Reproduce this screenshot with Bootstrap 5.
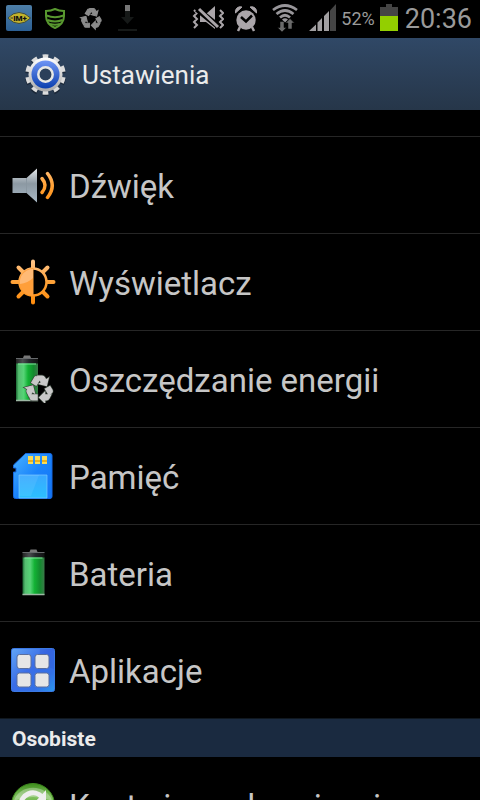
<!DOCTYPE html>
<html lang="pl" data-bs-theme="dark">
<head>
<meta charset="utf-8">
<meta name="viewport" content="width=device-width, initial-scale=1">
<title>Ustawienia</title>
<link rel="stylesheet" href="https://cdn.jsdelivr.net/npm/bootstrap@5.3.0/dist/css/bootstrap.min.css">
<style>
body { font-family: Roboto, "Open Sans", sans-serif; background: #000; color: #c6c6c6; }
svg { display: block; flex: none; }
.status-bar { height: 38px; padding: 0 8px 2px 6px; color: #9a9a9a; }
.status-left { gap: 10px; }
.status-right { gap: 7px; }
.status-power { gap: 5px; font-size: 18px; line-height: 24px; }
.status-power span { padding-top: 2px; }
.status-clock { padding-top: 2px; font-size: 27px; line-height: 32px; }
.title-bar { height: 72px; padding: 0 24px; gap: 16px; background: linear-gradient(#304866, #263649); }
.title-bar h1 { padding-top: 2px; font-size: 26px; line-height: 32px; color: #ebebeb; }
.settings { padding-top: 26px; }
.setting { height: 97px; padding: 0 9px; gap: 12px; border-top: 1px solid #262626; color: #c6c6c6; font-size: 33px; line-height: 40px; }
.setting span { padding-top: 4px; }
.setting:hover { color: #fff; }
.setting.after-section { height: 96px; border-top: 0; }
.section-title { padding: 2px 12px 0; font-size: 21px; line-height: 36px; color: #ebebeb; background: #1a2a40; border-top: 1px solid #101820; }
</style>
<script src="https://cdn.jsdelivr.net/npm/bootstrap@5.3.0/dist/js/bootstrap.bundle.min.js" defer></script>
</head>
<body class="vh-100 d-flex flex-column overflow-hidden">

<svg width="0" height="0" class="position-absolute" aria-hidden="true">
  <defs>
    <linearGradient id="gBlue" x2="0" y2="1"><stop stop-color="#6f95f5"/><stop offset="1" stop-color="#0b3fae"/></linearGradient>
    <linearGradient id="gMetal" x2="0" y2="1"><stop stop-color="#fff"/><stop offset="1" stop-color="#a9a9a9"/></linearGradient>
    <linearGradient id="gSteel" x2="0" y2="1"><stop stop-color="#e4e7ea"/><stop offset=".45" stop-color="#8c99a3"/><stop offset="1" stop-color="#a9b9c6"/></linearGradient>
    <linearGradient id="gOrange" gradientUnits="userSpaceOnUse" x1="0" y1="2" x2="0" y2="46"><stop stop-color="#ffc58a"/><stop offset=".5" stop-color="#ffa238"/><stop offset="1" stop-color="#ff8c0c"/></linearGradient>
    <linearGradient id="gCell"><stop stop-color="#1c6a34"/><stop offset=".12" stop-color="#55bd70"/><stop offset=".35" stop-color="#56d476"/><stop offset=".55" stop-color="#12b234"/><stop offset=".8" stop-color="#138a2e"/><stop offset="1" stop-color="#3a7a48"/></linearGradient>
    <linearGradient id="gCap"><stop stop-color="#222"/><stop offset=".3" stop-color="#4b4e50"/><stop offset=".6" stop-color="#23262a"/><stop offset="1" stop-color="#111"/></linearGradient>
    <linearGradient id="gCard" x2="1" y2="1"><stop stop-color="#48b2ff"/><stop offset=".5" stop-color="#1a83fb"/><stop offset="1" stop-color="#1374f4"/></linearGradient>
    <linearGradient id="gLabel" x2="0" y2="1"><stop stop-color="#3aa8ff"/><stop offset="1" stop-color="#2bc0ff"/></linearGradient>
    <linearGradient id="gApps" x2="1" y2="1"><stop stop-color="#62a6f6"/><stop offset=".45" stop-color="#3a6de6"/><stop offset=".75" stop-color="#3370e6"/><stop offset="1" stop-color="#2b98ec"/></linearGradient>
    <linearGradient id="gSync" x2="0" y2="1"><stop stop-color="#3f8f1d"/><stop offset=".3" stop-color="#7fbf5e"/><stop offset="1" stop-color="#3c9a12"/></linearGradient>
    <linearGradient id="gMail" x2="0" y2="1"><stop stop-color="#4e7fa8"/><stop offset="1" stop-color="#2c5f93"/></linearGradient>
    <path id="recycle" d="M5.770 7.150 7.200 4.780l1.030-1.710c.39-.65 1.330-.65 1.720 0l1.480 2.460-1.230 2.060-1 1.620-3.430-2.060zm15.950 5.820-1.600-2.660-3.460 2L18.870 16H20c.76 0 1.450-.43 1.790-1.110.14-.28.21-.58.21-.89 0-.36-.1-.71-.28-1.030zM16 21h1.500c.76 0 1.450-.43 1.790-1.110L20.740 17H16v-2l-4 4 4 4v-2zm-6-4H5.700l-.84 1.410c-.3.5-.32 1.120-.06 1.650.28.57.87.94 1.520.94H10v-4zm-3.880-2.650 1.730 1.040L6.480 9.900 1 11.270l1.700 1.020-.41.69c-.35.59-.38 1.310-.07 1.920l1.630 3.260 2.270-3.810zm10.900-9.210-1.300-2.170C15.350 2.370 14.700 2 14 2h-3.530l3.120 5.200-1.720 1.030 5.490 1.370 1.370-5.490-1.710 1.030z"/>
    <g id="cell">
      <path d="M8 0.500h6l1 2.500H7z" fill="#777"/>
      <rect y="3" width="22" height="6" fill="url(#gCap)"/>
      <path d="M0 3.500h22" stroke="#66696b" stroke-width="1"/>
      <rect y="8.500" width="22" height="37.500" fill="url(#gCell)"/>
      <path d="M2 9h18" stroke="#7fe79a" stroke-width="1"/>
      <path d="M0 45.500h22" stroke="#9db8a4" stroke-width="1.500"/>
    </g>
  </defs>
</svg>

<div class="status-bar d-flex align-items-center justify-content-between flex-shrink-0">
  <div class="status-left d-flex align-items-center">
    <svg width="26" height="26" viewBox="0 0 26 26" role="img" aria-label="IM+">
      <rect width="26" height="26" rx="2" fill="url(#gMail)"/>
      <path d="M2 13Q7 7.500 13 7.500T24.500 13Q19 18.500 13 18.500T2 13z" fill="#c3b32c" stroke="#26373c" stroke-width=".8"/>
      <text x="14" y="15.800" font-size="8" font-weight="900" text-anchor="middle" fill="#111">IM+</text>
      <path d="M4.500 13h2.500" stroke="#333" stroke-width="1"/>
    </svg>
    <svg width="26" height="26" viewBox="0 0 26 26" fill="none" stroke="#58982f" stroke-width="2" aria-hidden="true">
      <path d="M4 6q5 0 9-2 4 2 9 2v5q0 8-9 12-9-4-9-12z"/>
      <path d="M4.500 10.500q8.500 3.500 17 0M5.500 15q7.500 3 15 0M8 19q5 1.500 10 0" stroke-width="1.900"/>
    </svg>
    <svg width="26" height="26" viewBox="0 0 26 26" fill="#8b8b8b" stroke="#8b8b8b" stroke-width="1.100" aria-hidden="true"><g transform="translate(1.600 1.600) scale(.98)"><use href="#recycle"/></g></svg>
    <svg width="26" height="26" viewBox="0 0 26 26" aria-hidden="true">
      <path d="M11 6h5v6h4l-6.500 7L7 12h4z" fill="#161918"/>
      <path d="M11 0h5v6h-5z" fill="#777"/>
      <path d="M4 24h19v2H4z" fill="#161918"/>
    </svg>
  </div>
  <div class="status-right d-flex align-items-center">
    <svg width="32" height="28" viewBox="0 0 32 28" fill="none" stroke="#aaa5a9" stroke-width="2" aria-hidden="true">
      <path d="M2 6l3 3-3 3 3 3-3 3 3 3-3 3M28 6l3 3-3 3 3 3-3 3 3 3-3 3"/>
      <path d="M8 10h6l9-8v23l-9-7H8z" fill="#aaa5a9" stroke="none"/>
      <path d="M5 5l22 18" stroke="#000" stroke-width="6"/>
      <path d="M7 5l19 18" stroke-width="3"/>
    </svg>
    <svg width="32" height="28" viewBox="0 0 32 28" aria-hidden="true">
      <circle cx="15" cy="16" r="9.700" fill="#aaa5a9"/>
      <path d="M4.500 9A5 5 0 0 1 11 3zM25.500 9A5 5 0 0 0 19 3z" fill="#aaa5a9" stroke="#aaa5a9"/>
      <path d="M9 23l-2 4M21 23l2 4" stroke="#aaa5a9" stroke-width="2.500"/>
      <path d="M10 13l5 4.500 6-6" fill="none" stroke="#000" stroke-width="2.500"/>
    </svg>
    <svg width="32" height="28" viewBox="0 0 32 28" fill="none" stroke="#98969a" stroke-width="2.700" aria-hidden="true">
      <g transform="translate(2 0)"><path d="M1 6q12-9 24 0" /><path d="M4.500 10q8.500-7 17 0M8 13.500q5-4.500 10 0"/>
      <path d="M10 15.500q3-2.500 6 0L13 18.500z" fill="#98969a" stroke="none"/>
      <path d="M8 17.500h4v6h2.500L10 28l-4.500-4.500H8zM16 25v-6h-2.500l4.500-4.500 4.500 4.500H20v6z" fill="#6a6a6a" stroke="#000" stroke-width=".5"/></g>
    </svg>
    <div class="status-power d-flex align-items-center">
      <svg width="27" height="28" viewBox="0 0 27 28" aria-hidden="true">
        <path d="M0 27L7 20.500V27zM8.500 27V18.500L13 14V27zM15 27V12l5-5v20z" fill="#a19fa1"/>
        <path d="M21 27V6.500L27 0v27z" fill="#454545"/>
      </svg>
      <span>52%</span>
      <svg width="18" height="28" viewBox="0 0 18 28" aria-hidden="true">
        <path d="M6 0h6v3h6v9H0V3h6z" fill="#454545"/><path d="M0 12h18v15H0z" fill="#93cf00"/>
      </svg>
    </div>
    <time class="status-clock" datetime="20:36">20:36</time>
  </div>
</div>

<header class="title-bar d-flex align-items-center flex-shrink-0">
  <svg width="42" height="44" viewBox="0 0 42 44" aria-hidden="true">
    <g transform="translate(.500 0)">
    <circle cx="21" cy="24" r="17.500" fill="none" stroke="#16202c" opacity=".7" stroke-width="6" pathLength="100" stroke-dasharray="5 5" stroke-dashoffset="-2.500"/>
    <circle cx="21" cy="22.500" r="17.500" fill="none" stroke="#dcdcdc" stroke-width="5.500" pathLength="100" stroke-dasharray="5 5" stroke-dashoffset="-2.500"/>
    <circle cx="21" cy="22.500" r="17" fill="url(#gMetal)"/>
    <circle cx="21" cy="22.500" r="14" fill="url(#gBlue)"/>
    <circle cx="21" cy="22.500" r="7.200" fill="#2b405a" stroke="#e8e8e4" stroke-width="2.500"/>
    </g>
  </svg>
  <h1 class="m-0 fw-normal">Ustawienia</h1>
</header>

<main class="settings flex-grow-1 overflow-hidden">
  <nav class="d-flex flex-column" aria-label="Ustawienia">
    <a href="#dzwiek" class="setting d-flex align-items-center flex-shrink-0 text-decoration-none">
      <svg width="48" height="48" viewBox="0 0 48 48" aria-hidden="true">
        <path d="M3.500 17h14L28 7.500v34L17.500 32h-14z" fill="url(#gSteel)"/>
        <path d="M17.500 17v15" stroke="#8a97a1" stroke-width="1"/>
        <g fill="none" stroke="url(#gOrange)" stroke-width="3.500" stroke-linecap="round"><path d="M33 17.500q6 7 0 14"/><path d="M38.500 12.500q9.500 12 0 24"/></g>
      </svg>
      <span>Dźwięk</span>
    </a>
    <a href="#wyswietlacz" class="setting d-flex align-items-center flex-shrink-0 text-decoration-none">
      <svg width="48" height="48" viewBox="0 0 48 48" aria-hidden="true">
        <path d="M24 3.500V11M24 37v7.500M3.500 24H11M37 24h7.500M9.500 9.500l5.500 5.500M33 33l5.500 5.500M9.500 38.500L15 33M33 15l5.500-5.500" stroke="url(#gOrange)" stroke-width="4" stroke-linecap="round"/>
        <circle cx="24" cy="24" r="13.500" fill="#000" stroke="url(#gOrange)" stroke-width="2.500"/>
        <path d="M24.500 10a14 14 0 0 0 0 28z" fill="#ff9f3a"/>
        <path d="M24 11a13 13 0 0 0-13 15q8-1 13-6z" fill="#ffc38a" opacity=".75"/>
      </svg>
      <span>Wyświetlacz</span>
    </a>
    <a href="#energia" class="setting d-flex align-items-center flex-shrink-0 text-decoration-none">
      <svg width="48" height="48" viewBox="0 0 48 48" aria-hidden="true">
        <g transform="translate(7 0)"><use href="#cell"/></g>
        <g transform="translate(15.500 18.500) scale(1.260)"><g stroke="#38443a" stroke-width="2"><use href="#recycle"/></g><g fill="#c9c9c9" stroke="#c9c9c9" stroke-width="1"><use href="#recycle"/></g></g>
      </svg>
      <span>Oszczędzanie energii</span>
    </a>
    <a href="#pamiec" class="setting d-flex align-items-center flex-shrink-0 text-decoration-none">
      <svg width="48" height="48" viewBox="0 0 48 48" aria-hidden="true">
        <path d="M16.500 1.500h24.500q2 0 2 2v41q0 2-2 2H6.500q-2 0-2-2V20H7v-4H4.500v-3z" fill="url(#gCard)" stroke="#1667e0" stroke-width="1"/>
        <path d="M10 46V23h28v23z" fill="url(#gLabel)" stroke="#7cc8ff" stroke-width=".7"/>
        <path d="M22 23h8L22 44H10V23z" fill="#fff" opacity=".08"/>
        <path d="M19 4h5v8h-5zM26 4h5v8h-5zM33 4h5v8h-5z" fill="#f9dc58"/>
        <path d="M19 8h5v2h-5zM26 8h5v2h-5zM33 8h5v2h-5z" fill="#edb01c"/>
      </svg>
      <span>Pamięć</span>
    </a>
    <a href="#bateria" class="setting d-flex align-items-center flex-shrink-0 text-decoration-none">
      <svg width="48" height="48" viewBox="0 0 48 48" aria-hidden="true"><g transform="translate(13.500 0)"><use href="#cell"/></g></svg>
      <span>Bateria</span>
    </a>
    <a href="#aplikacje" class="setting d-flex align-items-center flex-shrink-0 text-decoration-none">
      <svg width="48" height="48" viewBox="0 0 48 48" aria-hidden="true">
        <rect x="2.500" y="2.500" width="43" height="43" rx="2" fill="url(#gApps)" stroke="#3a78e4"/>
        <path d="M31 3h14v20l-15-5z" fill="#2b50cf" opacity=".25"/>
        <g fill="#e6e6e6" stroke="#5a6f9e" stroke-width="1"><rect x="8" y="8.500" width="14" height="14" rx="2.500"/><rect x="26" y="8.500" width="14" height="14" rx="2.500"/><rect x="8" y="27" width="14" height="14" rx="2.500"/><rect x="26" y="27" width="14" height="14" rx="2.500"/></g>
      </svg>
      <span>Aplikacje</span>
    </a>
    <h2 class="section-title m-0 fw-bold flex-shrink-0">Osobiste</h2>
    <a href="#konta" class="setting after-section d-flex align-items-center flex-shrink-0 text-decoration-none">
      <svg width="48" height="48" viewBox="0 0 48 48" aria-hidden="true">
        <circle cx="24" cy="24" r="21.500" fill="url(#gSync)" stroke="#3e8a1e"/>
        <path d="M5 20a19.500 17 0 0 1 38 0q-19-8-38 0z" fill="#fff" opacity=".3"/>
        <path d="M12 25a12 12 0 0 1 21-9M36 24a12 12 0 0 1-21 9" fill="none" stroke="#eee" stroke-width="5"/>
        <path d="M37 9v12H26zM11 39V27h11z" fill="#eee"/>
      </svg>
      <span>Konta i synchronizacja</span>
    </a>
  </nav>
</main>
</body>
</html>
